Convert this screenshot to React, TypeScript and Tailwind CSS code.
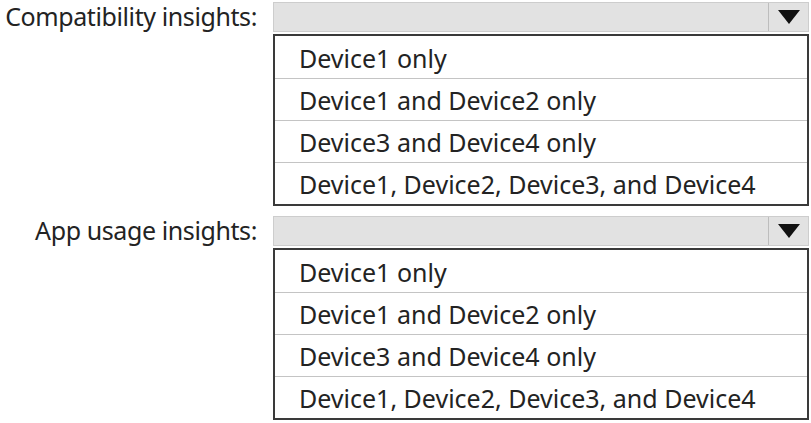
import React from "react";

const options = [
  "Device1 only",
  "Device1 and Device2 only",
  "Device3 and Device4 only",
  "Device1, Device2, Device3, and Device4",
];

function Dropdown({ label }: { label: string }) {
  return (
    <div className="flex">
      {/* label column */}
      <div className="w-[273px] shrink-0 flex justify-end pr-[16px]">
        <span className="h-[30px] leading-[28px] whitespace-nowrap tracking-[-0.4px]">{label}</span>
      </div>

      <div className="w-[536px] flex flex-col gap-[2px]">
        {/* closed select bar */}
        <div className="h-[30px] flex bg-[#e2e2e2] border border-[#cdcdcd]">
          <div className="flex-1" />
          <div className="w-[40px] border-l border-[#bdbdbd] flex items-center justify-center">
            <svg width="22" height="14" viewBox="0 0 22 14">
              <polygon points="0,0 22,0 11,14" fill="#111" />
            </svg>
          </div>
        </div>

        {/* option list */}
        <div className="border-2 border-[#3a3a3a] bg-white">
          {options.map((opt, i) => (
            <div
              key={opt}
              className={
                "h-[42px] flex items-center pl-[24px] pt-[2px] leading-none " +
                (i > 0 ? "border-t border-[#c4c4c4]" : "")
              }
            >
              {opt}
            </div>
          ))}
        </div>
      </div>
    </div>
  );
}

export default function App() {
  return (
    <div
      className="w-[811px] h-[423px] bg-white text-[#232323] text-[25px] pt-[2px] flex flex-col gap-[10px]"
      style={{ fontFamily: '"Noto Sans", "Open Sans", sans-serif' }}
    >
      <Dropdown label="Compatibility insights:" />
      <Dropdown label="App usage insights:" />
    </div>
  );
}
